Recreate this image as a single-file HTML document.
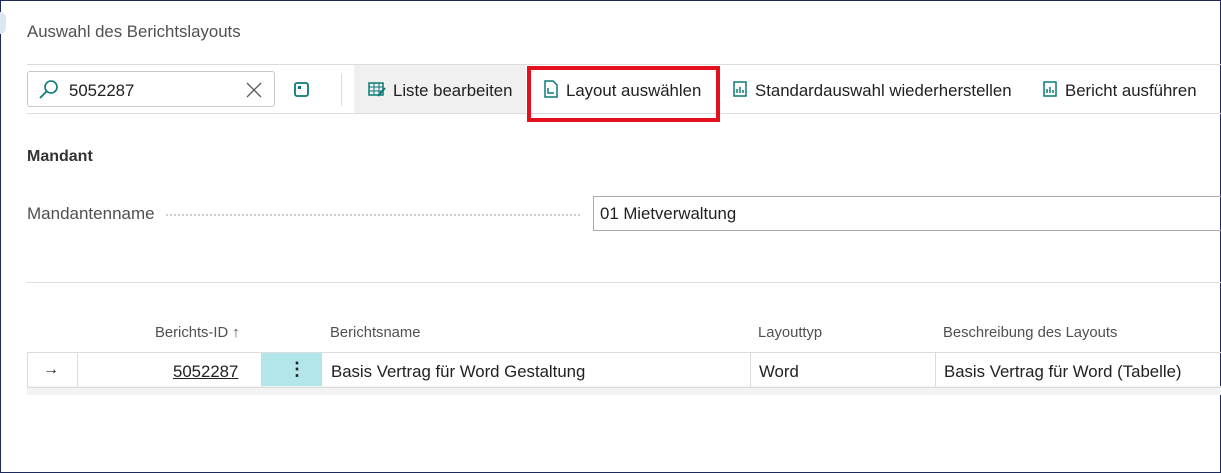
<!DOCTYPE html><html><head><style>
body{margin:0;width:1221px;height:473px;overflow:hidden;background:#fff;font-family:"Liberation Sans",sans-serif;color:#212121}
.frame{position:absolute;left:0;top:0;width:1219px;height:471px;border:1px solid #1f2a5a}
.a{position:absolute}
.t{font-size:15px;white-space:nowrap}
.b{font-size:16.8px}
</style></head><body><div class="frame"></div>
<div class="a" style="left:0;top:12px;width:6px;height:22px;border-radius:0 11px 11px 0;background:#dbe8f3"></div>
<div class="a t" style="left:27px;top:22px;color:#505050;font-size:16.8px">Auswahl des Berichtslayouts</div>
<div class="a" style="left:27px;top:64px;width:1194px;height:1px;background:#dcdcdc"></div>
<div class="a" style="left:27px;top:113px;width:1194px;height:1px;background:#dcdcdc"></div>
<div class="a" style="left:354px;top:65px;width:172px;height:48px;background:#f0f0f0"></div>
<div class="a" style="left:27px;top:71px;width:246px;height:34px;border:1px solid #c8c8c8;border-radius:3px"></div>
<svg class="a" style="left:38px;top:79px" width="22" height="22"><circle cx="13" cy="8" r="6" fill="none" stroke="#0b7a75" stroke-width="1.6"/><line x1="9" y1="12" x2="2" y2="19" stroke="#0b7a75" stroke-width="1.8"/></svg>
<div class="a t b" style="left:69px;top:81px">5052287</div>
<svg class="a" style="left:246px;top:82px" width="16" height="16"><path d="M1 1L15 15M15 1L1 15" stroke="#555" stroke-width="1.3"/></svg>
<svg class="a" style="left:293px;top:81px" width="18" height="18"><rect x="2" y="2" width="13" height="13" rx="2" fill="none" stroke="#0b7a75" stroke-width="1.8"/><rect x="5" y="5" width="3" height="3" fill="#0b7a75"/></svg>
<div class="a" style="left:341px;top:74px;width:1px;height:32px;background:#dcdcdc"></div>
<svg class="a" style="left:368px;top:82px" width="18" height="16"><rect x="1" y="1" width="14" height="12" fill="none" stroke="#0b7a75" stroke-width="1.5"/><path d="M1 5H15M1 9H15M6 1V13M11 1V13" stroke="#0b7a75"/><path d="M10 14L17 6" stroke="#0b7a75" stroke-width="2"/></svg>
<div class="a t b" style="left:393px;top:81px">Liste bearbeiten</div>
<svg class="a" style="left:543px;top:80px" width="18" height="19"><path d="M2 1H10L14 5V17H2Z" fill="none" stroke="#0b7a75" stroke-width="1.5"/><path d="M5 8V13H11" fill="none" stroke="#0b7a75" stroke-width="1.5"/></svg>
<div class="a t b" style="left:566px;top:81px">Layout auswählen</div>
<div class="a" style="left:527px;top:66px;width:185px;height:48px;border:4px solid #e3101d"></div>
<svg class="a" style="left:733px;top:81px" width="14" height="16"><rect x="1" y="1" width="12" height="14" fill="none" stroke="#0b7a75" stroke-width="1.5"/><path d="M4 12V8M7 12V6M10 12V9" stroke="#0b7a75" stroke-width="1.5"/></svg>
<div class="a t b" style="left:755px;top:81px">Standardauswahl wiederherstellen</div>
<svg class="a" style="left:1043px;top:81px" width="14" height="16"><rect x="1" y="1" width="12" height="14" fill="none" stroke="#0b7a75" stroke-width="1.5"/><path d="M4 12V8M7 12V6M10 12V9" stroke="#0b7a75" stroke-width="1.5"/></svg>
<div class="a t b" style="left:1065px;top:81px">Bericht ausführen</div>
<div class="a t" style="left:27px;top:148px;font-weight:bold;color:#333;font-size:16px">Mandant</div>
<div class="a t" style="left:27px;top:204px;color:#505050;font-size:17px">Mandantenname</div>
<div class="a" style="left:166px;top:214px;width:414px;border-top:2px dotted #d0d0d0"></div>
<div class="a" style="left:593px;top:196px;width:640px;height:33px;border:1px solid #aaa"></div>
<div class="a t b" style="left:600px;top:204px">01 Mietverwaltung</div>
<div class="a" style="left:27px;top:282px;width:1194px;height:1px;background:#dcdcdc"></div>
<div class="a t" style="left:155px;top:325px;font-size:14.8px;color:#505050">Berichts-ID ↑</div>
<div class="a t" style="left:330px;top:325px;font-size:14.8px;color:#505050">Berichtsname</div>
<div class="a t" style="left:758px;top:325px;font-size:14.8px;color:#505050">Layouttyp</div>
<div class="a t" style="left:943px;top:325px;font-size:14.8px;color:#505050">Beschreibung des Layouts</div>
<div class="a" style="left:27px;top:386px;width:1194px;height:9px;background:#f3f3f3"></div>
<div class="a" style="left:27px;top:352px;width:1194px;height:34px;border-top:1px solid #dcdcdc;border-bottom:1px solid #dcdcdc"></div>
<div class="a" style="left:27px;top:352px;width:1px;height:35px;background:#dcdcdc"></div>
<div class="a" style="left:77px;top:352px;width:1px;height:35px;background:#dcdcdc"></div>
<div class="a" style="left:261px;top:353px;width:61px;height:33px;background:#b2e6ea"></div>
<div class="a" style="left:750px;top:352px;width:1px;height:35px;background:#dcdcdc"></div>
<div class="a" style="left:935px;top:352px;width:1px;height:35px;background:#dcdcdc"></div>
<div class="a t" style="left:43px;top:361px;font-size:16px">→</div>
<div class="a t b" style="left:173px;top:362px;text-decoration:underline">5052287</div>
<div class="a t" style="left:288px;top:359px;font-size:18px;font-weight:bold">⋮</div>
<div class="a t b" style="left:331px;top:362px">Basis Vertrag für Word Gestaltung</div>
<div class="a t b" style="left:759px;top:362px">Word</div>
<div class="a t b" style="left:944px;top:362px">Basis Vertrag für Word (Tabelle)</div>
</body></html>
